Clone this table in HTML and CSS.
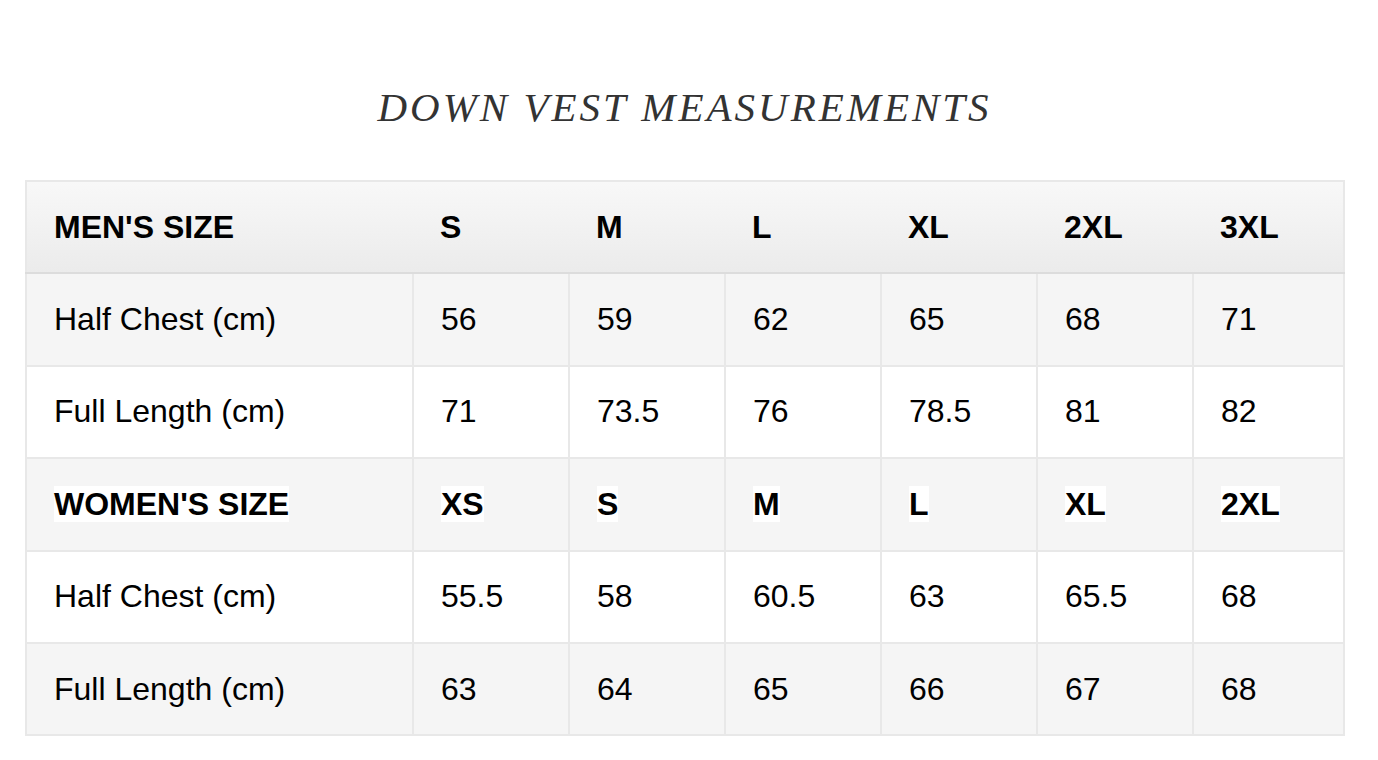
FILE: index.html
```html
<!DOCTYPE html>
<html>
<head>
<meta charset="utf-8">
<link rel="stylesheet" href="styles.css">
</head>
<body>
<div class="wrap">
  <h1 class="title">DOWN VEST MEASUREMENTS</h1>
  <table class="sizes">
    <colgroup>
      <col class="c-label"><col class="c-val"><col class="c-val"><col class="c-val"><col class="c-val"><col class="c-val"><col class="c-last">
    </colgroup>
    <thead>
      <tr class="head">
        <th>MEN'S SIZE</th><th>S</th><th>M</th><th>L</th><th>XL</th><th>2XL</th><th>3XL</th>
      </tr>
    </thead>
    <tbody>
      <tr class="gray">
        <td>Half Chest (cm)</td><td>56</td><td>59</td><td>62</td><td>65</td><td>68</td><td>71</td>
      </tr>
      <tr class="white">
        <td>Full Length (cm)</td><td>71</td><td>73.5</td><td>76</td><td>78.5</td><td>81</td><td>82</td>
      </tr>
      <tr class="gray sub">
        <td><span class="hl">WOMEN'S SIZE</span></td><td><span class="hl">XS</span></td><td><span class="hl">S</span></td><td><span class="hl">M</span></td><td><span class="hl">L</span></td><td><span class="hl">XL</span></td><td><span class="hl">2XL</span></td>
      </tr>
      <tr class="white">
        <td>Half Chest (cm)</td><td>55.5</td><td>58</td><td>60.5</td><td>63</td><td>65.5</td><td>68</td>
      </tr>
      <tr class="gray">
        <td>Full Length (cm)</td><td>63</td><td>64</td><td>65</td><td>66</td><td>67</td><td>68</td>
      </tr>
    </tbody>
  </table>
</div>
</body>
</html>
```

FILE: styles.css
```css
html, body {
  margin: 0;
  padding: 0;
  background: #ffffff;
}
body {
  font-family: "Liberation Sans", Arial, sans-serif;
  color: #000;
}
.wrap {
  width: 1319px;
  margin-left: 25px;
  padding-top: 84px;
}
.title {
  margin: 0 0 50px 0;
  text-align: center;
  font-family: "Liberation Serif", "Times New Roman", serif;
  font-style: italic;
  font-weight: normal;
  font-size: 41px;
  line-height: 46px;
  letter-spacing: 3px;
  color: #333333;
}
.sizes {
  width: 1318px;
  border-collapse: collapse;
  table-layout: fixed;
  border: 2px solid #e8e8e8;
  font-size: 32px;
}
.c-label { width: 387px; }
.c-val { width: 156px; }
.c-last { width: 151px; }
.sizes th,
.sizes td {
  height: 90.4px;
  padding: 0 0 0 27px;
  text-align: left;
  vertical-align: middle;
  border: 2px solid #e8e8e8;
}
.sizes th {
  font-weight: bold;
  border-left: none;
  border-right: none;
  border-bottom: 2px solid #dcdcdc;
}
.head {
  background: linear-gradient(to bottom, #f8f8f8, #ebebeb);
}
.gray { background: #f5f5f5; }
.white { background: #ffffff; }
.sub td { font-weight: bold; }
.hl { background: #ffffff; }
```
